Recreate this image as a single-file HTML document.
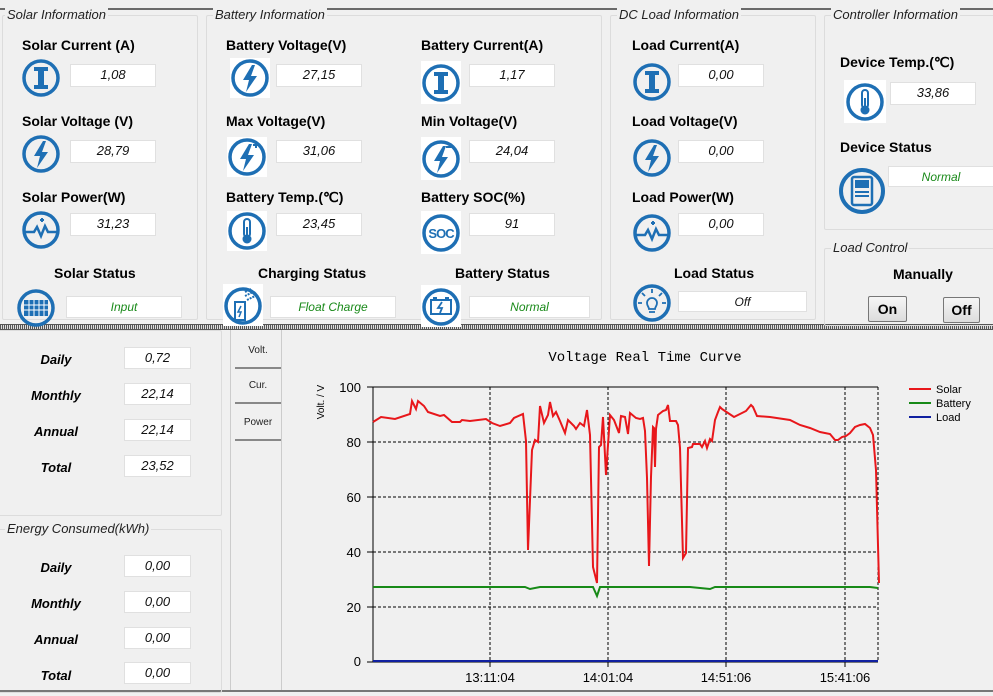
<!DOCTYPE html>
<html><head><meta charset="utf-8"><style>
*{margin:0;padding:0;box-sizing:border-box}
body{width:993px;height:696px;background:#f0f0f0;position:relative;overflow:hidden;font-family:"Liberation Sans",Arial,sans-serif}
.a{position:absolute}
.gt{position:absolute;font-style:italic;font-size:13px;color:#222;background:#f0f0f0;padding:0 2px;line-height:14px}
.gb{position:absolute;border:1px solid #dcdcdc;border-radius:2px}
.lb{position:absolute;font-weight:bold;font-size:14px;color:#000;line-height:16px;white-space:nowrap}
.bx{position:absolute;background:#fff;border:1px solid #e0e0e0;font-style:italic;font-size:13px;text-align:center;color:#111;line-height:20px}
.st{color:#1a8a1a;font-size:12px}
.el{position:absolute;font-weight:bold;font-style:italic;font-size:13px;width:100px;text-align:center}
.tab{position:absolute;left:235px;width:46px;font-size:10px;text-align:center;border-bottom:2px solid #888;color:#222}
.btn{position:absolute;border:1px solid #777;border-radius:2px;background:linear-gradient(#f6f6f6,#dcdcdc);font-weight:bold;font-size:14px;text-align:center;line-height:24px}
svg.ic{position:absolute}
</style></head><body>
<div class="a" style="left:0;top:8px;width:993px;height:2px;background:#6a6a6a"></div>
<div class="a" style="left:0;top:324px;width:993px;height:6px;background:repeating-linear-gradient(90deg,#555 0 1px,#ddd 1px 2px);border-top:1px solid #555;border-bottom:1px solid #555"></div>
<div class="a" style="left:0;top:690px;width:993px;height:2px;background:#777"></div>

<!-- group boxes -->
<div class="gb" style="left:2px;top:15px;width:196px;height:305px"></div>
<div class="gt" style="left:5px;top:8px">Solar Information</div>
<div class="gb" style="left:206px;top:15px;width:396px;height:305px"></div>
<div class="gt" style="left:213px;top:8px">Battery Information</div>
<div class="gb" style="left:610px;top:15px;width:206px;height:305px"></div>
<div class="gt" style="left:617px;top:8px">DC Load Information</div>
<div class="gb" style="left:824px;top:15px;width:172px;height:215px"></div>
<div class="gt" style="left:831px;top:8px">Controller Information</div>
<div class="gb" style="left:824px;top:248px;width:172px;height:78px"></div>
<div class="gt" style="left:831px;top:241px">Load Control</div>

<svg width="0" height="0" style="position:absolute"><defs>
<g id="cI"><circle cx="20" cy="20" r="17" fill="none" stroke="#1e6fb4" stroke-width="3.5"/><path d="M13 9h14v4h-4v14h4v4H13v-4h4V13h-4z" fill="#1e6fb4"/></g>
<g id="cV"><circle cx="20" cy="20" r="17" fill="none" stroke="#1e6fb4" stroke-width="3.5"/><path d="M22 7 13 22h6l-3 12 11-16h-6l4-11z" fill="#1e6fb4"/></g>
<g id="cP"><circle cx="20" cy="20" r="17" fill="none" stroke="#1e6fb4" stroke-width="3.5"/><path d="M4 22h9l3-5 4 9 4-10 3 6h9" fill="none" stroke="#1e6fb4" stroke-width="2.5"/><path d="M19 10h4M21 8v4" stroke="#1e6fb4" stroke-width="2"/></g>
<g id="cT"><circle cx="20" cy="20" r="17" fill="none" stroke="#1e6fb4" stroke-width="3.5"/><rect x="17" y="8" width="6" height="18" rx="3" fill="none" stroke="#1e6fb4" stroke-width="2"/><circle cx="20" cy="28" r="4.5" fill="#1e6fb4"/><rect x="19" y="16" width="2" height="10" fill="#1e6fb4"/></g>
</defs></svg>

<!-- Solar -->
<div class="lb" style="left:22px;top:37px">Solar Current (A)</div>
<svg class="ic" style="left:21px;top:58px" width="40" height="40"><use href="#cI"/></svg>
<div class="bx" style="left:70px;top:64px;width:86px;height:23px">1,08</div>
<div class="lb" style="left:22px;top:113px">Solar Voltage (V)</div>
<svg class="ic" style="left:21px;top:134px" width="40" height="40"><use href="#cV"/></svg>
<div class="bx" style="left:70px;top:140px;width:86px;height:23px">28,79</div>
<div class="lb" style="left:22px;top:189px">Solar Power(W)</div>
<svg class="ic" style="left:21px;top:210px" width="40" height="40"><use href="#cP"/></svg>
<div class="bx" style="left:70px;top:213px;width:86px;height:23px">31,23</div>
<div class="lb" style="left:54px;top:265px">Solar Status</div>
<svg class="ic" style="left:16px;top:288px" width="40" height="40"><circle cx="20" cy="20" r="17" fill="none" stroke="#1e6fb4" stroke-width="3.5"/><rect x="8" y="12" width="24" height="16" fill="#1e6fb4"/><path d="M8 17h24M8 22h24M13 12v16M18 12v16M23 12v16M28 12v16" stroke="#fff" stroke-width="1"/></svg>
<div class="bx st" style="left:66px;top:296px;width:116px;height:22px">Input</div>

<!-- Battery -->
<div class="lb" style="left:226px;top:37px">Battery Voltage(V)</div>
<svg class="ic" style="left:230px;top:58px" width="40" height="40"><rect width="40" height="40" fill="#fff"/><use href="#cV"/></svg>
<div class="bx" style="left:276px;top:64px;width:86px;height:23px">27,15</div>
<div class="lb" style="left:226px;top:113px">Max Voltage(V)</div>
<svg class="ic" style="left:227px;top:137px" width="40" height="40"><rect width="40" height="40" fill="#fff"/><use href="#cV"/><path d="M26 8h6M29 5v6" stroke="#1e6fb4" stroke-width="2"/></svg>
<div class="bx" style="left:276px;top:140px;width:86px;height:23px">31,06</div>
<div class="lb" style="left:226px;top:189px">Battery Temp.(℃)</div>
<svg class="ic" style="left:227px;top:211px" width="40" height="40"><rect width="40" height="40" fill="#fff"/><use href="#cT"/></svg>
<div class="bx" style="left:276px;top:213px;width:86px;height:23px">23,45</div>
<div class="lb" style="left:258px;top:265px">Charging Status</div>
<svg class="ic" style="left:223px;top:284px" width="40" height="42"><rect width="40" height="42" fill="#fff"/><circle cx="20" cy="22" r="17" fill="none" stroke="#1e6fb4" stroke-width="3.5"/><rect x="12" y="18" width="10" height="18" fill="none" stroke="#1e6fb4" stroke-width="2"/><path d="M18 22l-3 6h3l-2 5" stroke="#1e6fb4" stroke-width="1.5" fill="none"/><path d="M22 12l8-4M24 16l8-4M22 8l6-3" stroke="#1e6fb4" stroke-width="2" stroke-dasharray="2 1"/></svg>
<div class="bx st" style="left:270px;top:296px;width:126px;height:22px">Float Charge</div>

<div class="lb" style="left:421px;top:37px">Battery Current(A)</div>
<svg class="ic" style="left:421px;top:61px" width="40" height="43"><rect width="40" height="43" fill="#fff"/><use href="#cI" y="2"/></svg>
<div class="bx" style="left:469px;top:64px;width:86px;height:23px">1,17</div>
<div class="lb" style="left:421px;top:113px">Min Voltage(V)</div>
<svg class="ic" style="left:421px;top:137px" width="40" height="43"><rect width="40" height="43" fill="#fff"/><use href="#cV" y="2"/><path d="M25 10h6" stroke="#1e6fb4" stroke-width="2"/></svg>
<div class="bx" style="left:469px;top:140px;width:86px;height:23px">24,04</div>
<div class="lb" style="left:421px;top:189px">Battery SOC(%)</div>
<svg class="ic" style="left:421px;top:211px" width="40" height="43"><rect width="40" height="43" fill="#fff"/><circle cx="20" cy="22" r="17" fill="none" stroke="#1e6fb4" stroke-width="3.5"/><text x="20" y="27" text-anchor="middle" font-family="Liberation Sans" font-weight="bold" font-size="13" fill="#1e6fb4" letter-spacing="-1">SOC</text></svg>
<div class="bx" style="left:469px;top:213px;width:86px;height:23px">91</div>
<div class="lb" style="left:455px;top:265px">Battery Status</div>
<svg class="ic" style="left:421px;top:285px" width="40" height="42"><rect width="40" height="42" fill="#fff"/><circle cx="20" cy="22" r="17" fill="none" stroke="#1e6fb4" stroke-width="3.5"/><rect x="10" y="15" width="20" height="14" fill="none" stroke="#1e6fb4" stroke-width="2"/><path d="M12 13h4M24 13h4" stroke="#1e6fb4" stroke-width="2"/><path d="M21 17l-4 6h4l-2 5" stroke="#1e6fb4" stroke-width="1.8" fill="none"/></svg>
<div class="bx st" style="left:469px;top:296px;width:121px;height:22px">Normal</div>

<!-- DC Load -->
<div class="lb" style="left:632px;top:37px">Load Current(A)</div>
<svg class="ic" style="left:632px;top:62px" width="40" height="40"><use href="#cI"/></svg>
<div class="bx" style="left:678px;top:64px;width:86px;height:23px">0,00</div>
<div class="lb" style="left:632px;top:113px">Load Voltage(V)</div>
<svg class="ic" style="left:632px;top:138px" width="40" height="40"><use href="#cV"/></svg>
<div class="bx" style="left:678px;top:140px;width:86px;height:23px">0,00</div>
<div class="lb" style="left:632px;top:189px">Load Power(W)</div>
<svg class="ic" style="left:632px;top:213px" width="40" height="40"><use href="#cP"/></svg>
<div class="bx" style="left:678px;top:213px;width:86px;height:23px">0,00</div>
<div class="lb" style="left:674px;top:265px">Load Status</div>
<svg class="ic" style="left:632px;top:283px" width="40" height="40"><circle cx="20" cy="20" r="17" fill="none" stroke="#1e6fb4" stroke-width="3.5"/><path d="M15 20a5 5 0 1 1 10 0c0 3-2 4-2 6h-6c0-2-2-3-2-6z" fill="none" stroke="#1e6fb4" stroke-width="1.8"/><path d="M17 29h6M20 6v4M10 10l3 3M30 10l-3 3M6 20h4M30 20h4" stroke="#1e6fb4" stroke-width="1.8"/></svg>
<div class="bx" style="left:678px;top:291px;width:129px;height:21px;font-size:12px">Off</div>

<!-- Controller -->
<div class="lb" style="left:840px;top:54px">Device Temp.(℃)</div>
<svg class="ic" style="left:844px;top:80px" width="42" height="43"><rect width="42" height="43" fill="#fff"/><use href="#cT" x="1" y="2"/></svg>
<div class="bx" style="left:890px;top:82px;width:86px;height:23px">33,86</div>
<div class="lb" style="left:840px;top:139px">Device Status</div>
<svg class="ic" style="left:838px;top:165px" width="48" height="52"><circle cx="24" cy="26" r="21" fill="none" stroke="#1e6fb4" stroke-width="4"/><rect x="14" y="12" width="20" height="28" rx="2" fill="none" stroke="#1e6fb4" stroke-width="2.5"/><rect x="17" y="15" width="14" height="8" fill="#1e6fb4"/><path d="M17 27h14M17 31h14" stroke="#1e6fb4" stroke-width="2"/></svg>
<div class="bx st" style="left:888px;top:166px;width:106px;height:21px">Normal</div>
<div class="lb" style="left:893px;top:266px">Manually</div>
<div class="btn" style="left:868px;top:296px;width:39px;height:26px">On</div>
<div class="btn" style="left:943px;top:297px;width:37px;height:26px">Off</div>

<!-- Energy -->
<div class="gb" style="left:-2px;top:330px;width:224px;height:186px"></div>
<div class="el" style="left:6px;top:352px">Daily</div><div class="bx" style="left:124px;top:347px;width:67px;height:22px">0,72</div>
<div class="el" style="left:6px;top:388px">Monthly</div><div class="bx" style="left:124px;top:383px;width:67px;height:22px">22,14</div>
<div class="el" style="left:6px;top:424px">Annual</div><div class="bx" style="left:124px;top:419px;width:67px;height:22px">22,14</div>
<div class="el" style="left:6px;top:460px">Total</div><div class="bx" style="left:124px;top:455px;width:67px;height:22px">23,52</div>
<div class="gb" style="left:-2px;top:529px;width:224px;height:164px"></div>
<div class="gt" style="left:5px;top:522px">Energy Consumed(kWh)</div>
<div class="el" style="left:6px;top:560px">Daily</div><div class="bx" style="left:124px;top:555px;width:67px;height:22px">0,00</div>
<div class="el" style="left:6px;top:596px">Monthly</div><div class="bx" style="left:124px;top:591px;width:67px;height:22px">0,00</div>
<div class="el" style="left:6px;top:632px">Annual</div><div class="bx" style="left:124px;top:627px;width:67px;height:22px">0,00</div>
<div class="el" style="left:6px;top:668px">Total</div><div class="bx" style="left:124px;top:662px;width:67px;height:22px">0,00</div>

<div class="a" style="left:230px;top:330px;width:1px;height:360px;background:#ccc"></div>
<div class="a" style="left:281px;top:330px;width:1px;height:360px;background:#ccc"></div>
<div class="tab" style="top:336px;height:33px;line-height:30px">Volt.</div>
<div class="tab" style="top:370px;height:34px;line-height:32px">Cur.</div>
<div class="tab" style="top:405px;height:36px;line-height:36px">Power</div>

<!-- Chart -->
<svg class="a" style="left:282px;top:330px" width="711" height="360" viewBox="282 330 711 360">
<text x="645" y="361" text-anchor="middle" font-family="Liberation Mono" font-size="14" fill="#000">Voltage Real Time Curve</text>
<text transform="translate(324,402) rotate(-90)" text-anchor="middle" font-family="Liberation Sans" font-size="10">Volt. / V</text>
<g font-family="Liberation Sans" font-size="13" text-anchor="end">
<text x="361" y="392">100</text><text x="361" y="447">80</text><text x="361" y="502">60</text><text x="361" y="557">40</text><text x="361" y="612">20</text><text x="361" y="666">0</text>
</g>
<g font-family="Liberation Sans" font-size="13" text-anchor="middle">
<text x="490" y="682">13:11:04</text><text x="608" y="682">14:01:04</text><text x="726" y="682">14:51:06</text><text x="845" y="682">15:41:06</text>
</g>
<g stroke="#000" stroke-width="1" stroke-dasharray="3 2" fill="none">
<path d="M373 442H878M373 497H878M373 552H878M373 607H878M490 387V662M608 387V662M726 387V662M845 387V662M878 387V662"/>
</g>
<path d="M373 387H878M373 387V662H878" stroke="#000" fill="none"/>
<path d="M367 387h6M367 442h6M367 497h6M367 552h6M367 607h6M367 662h6M490 662v5M608 662v5M726 662v5M845 662v5" stroke="#000"/>
<path d="M373 422L381 417L395 419L410 414L412 401L416 409L418 401L424 406L428 412L440 416L444 415L452 422L460 422L462 420L470 421L486 419L492 423L500 426L510 423L514 418L523 414L526 441L528 550L532 450L535 440L538 442L540 406L544 423L548 415L550 402L553 416L556 412L560 421L565 433L568 420L574 426L576 429L580 423L584 426L587 410L590 435L593 567L597 583L599 447L601 445L603 417L606 475L610 415L614 420L619 433L621 416L625 417L628 434L630 413L636 418L640 419L643 418L645 431L647 478L649 566L651 477L653 427L654 428L655 467L656 429L658 415L663 411L666 410L668 405L670 421L676 421L678 425L680 448L683 558L686 553L688 448L692 447L693 444L700 444L702 447L705 441L707 448L710 439L712 441L715 420L718 412L720 407L722 409L725 411L734 417L746 411L751 405L753 407L757 416L770 417L790 420L800 425L810 428L820 432L830 434L835 440L838 440L842 437L846 436L850 433L855 427L860 425L865 424L870 428L873 435L876 470L879 583" fill="none" stroke="#e8171b" stroke-width="2"/>
<path d="M373 587L525 587L530 589L540 587L593 587L597 596L600 587L640 587L690 587L700 588L710 589L715 587L870 587L878 588" fill="none" stroke="#178a17" stroke-width="2"/>
<path d="M373 661H878" stroke="#1020a0" stroke-width="2"/>
<path d="M909 389h22" stroke="#e8171b" stroke-width="2"/><path d="M909 403h22" stroke="#178a17" stroke-width="2"/><path d="M909 417h22" stroke="#1020a0" stroke-width="2"/>
<g font-family="Liberation Sans" font-size="11"><text x="936" y="393">Solar</text><text x="936" y="407">Battery</text><text x="936" y="421">Load</text></g>
</svg>
</body></html>
